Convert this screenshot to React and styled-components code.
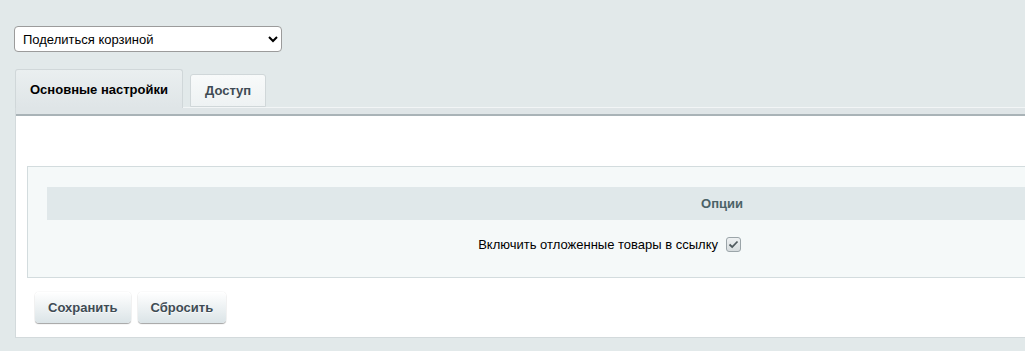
import React from "react";
import styled, { createGlobalStyle } from "styled-components";

const GlobalStyle = createGlobalStyle`
  html, body {
    margin: 0;
    padding: 0;
    overflow: hidden;
    background: #e2e9ea;
    font-family: "Liberation Sans", Arial, sans-serif;
    font-size: 13px;
  }
`;

const Page = styled.div`
  padding: 26px 0 0 14px;
  width: 1430px;
`;

const Select = styled.select`
  display: block;
  width: 268px;
  height: 26px;
  padding: 0 4px;
  border: 1px solid #9b9b9b;
  border-radius: 4px;
  background: #fff;
  color: #000;
  font-family: "Liberation Sans", Arial, sans-serif;
  font-size: 13px;
`;

const TabRow = styled.div`
  display: flex;
  align-items: flex-end;
  gap: 7px;
  margin: 17px 0 -1px 1px;
  position: relative;
  z-index: 1;
`;

const Tab = styled.div`
  display: flex;
  align-items: center;
  box-sizing: border-box;
  height: ${(p) => (p.$active ? "39px" : "33px")};
  padding: 0 14px;
  border: 1px solid #d0d7d9;
  border-bottom: ${(p) => (p.$active ? "none" : "1px solid #d0d7d9")};
  border-radius: 3px 3px 0 0;
  background: ${(p) =>
    p.$active
      ? "linear-gradient(#eaeff0, #dfe5e7)"
      : "linear-gradient(#f8fafa, #eef2f3)"};
  font-weight: bold;
  color: ${(p) => (p.$active ? "#000" : "#3f4b54")};
  margin-bottom: ${(p) => (p.$active ? "0" : "1px")};
`;

const Panel = styled.div`
  margin-left: 1px;
  width: 1414px;
  background: #fff;
  border: 1px solid #d3dadc;
  border-top: none;
`;

const TabStrip = styled.div`
  height: 6px;
  background: #dfe5e7;
  border-top: 1px solid #f2f5f6;
  border-bottom: 2px solid #a9b3b7;
`;

const Content = styled.div`
  padding: 50px 12px 14px 11px;
`;

const OptionsBlock = styled.div`
  background: #f5f9f9;
  border: 1px solid #d3dcde;
  padding: 20px 20px 24px 19px;
`;

const HeadRow = styled.div`
  height: 33px;
  display: flex;
  align-items: center;
  justify-content: center;
  background: #e0e8ea;
  font-weight: bold;
  color: #4b6267;
`;

const FieldRow = styled.div`
  display: grid;
  grid-template-columns: 1fr 1fr;
  align-items: center;
  margin-top: 15px;
  min-height: 18px;
`;

const Label = styled.label`
  text-align: right;
  padding-right: 4px;
  color: #000;
`;

const Value = styled.div`
  padding-left: 4px;
  display: flex;
  align-items: center;
`;

const CheckBox = styled.span`
  display: inline-flex;
  align-items: center;
  justify-content: center;
  box-sizing: border-box;
  width: 15px;
  height: 15px;
  border: 1px solid #9ba5a9;
  border-radius: 3px;
  background: linear-gradient(#eef1f2, #d6dcde);
`;

const Buttons = styled.div`
  display: flex;
  gap: 7px;
  margin-top: 14px;
  padding-left: 8px;
`;

const Button = styled.button`
  height: 31px;
  padding: 0 13px;
  border: none;
  border-radius: 4px;
  background: linear-gradient(#ffffff, #dbe4e7);
  box-shadow: 0 0 1px rgba(0, 0, 0, 0.2), 0 1px 1px rgba(0, 0, 0, 0.35),
    inset 0 1px #fff;
  font-family: "Liberation Sans", Arial, sans-serif;
  font-size: 13px;
  font-weight: bold;
  color: #3f4b54;
  text-shadow: 0 1px rgba(255, 255, 255, 0.7);
`;

function Check() {
  return (
    <CheckBox>
      <svg width="11" height="9" viewBox="0 0 11 9">
        <path
          d="M1.5 4.5 L4.2 7 L9.5 1.5"
          fill="none"
          stroke="#4f5a5e"
          strokeWidth="1.8"
        />
      </svg>
    </CheckBox>
  );
}

export default function App() {
  return (
    <>
      <GlobalStyle />
      <Page>
        <Select defaultValue="share">
          <option value="share">Поделиться корзиной</option>
        </Select>
        <TabRow>
          <Tab $active>Основные настройки</Tab>
          <Tab>Доступ</Tab>
        </TabRow>
        <Panel>
          <TabStrip />
          <Content>
            <OptionsBlock>
              <HeadRow>Опции</HeadRow>
              <FieldRow>
                <Label>Включить отложенные товары в ссылку</Label>
                <Value>
                  <Check />
                </Value>
              </FieldRow>
            </OptionsBlock>
            <Buttons>
              <Button>Сохранить</Button>
              <Button>Сбросить</Button>
            </Buttons>
          </Content>
        </Panel>
      </Page>
    </>
  );
}
